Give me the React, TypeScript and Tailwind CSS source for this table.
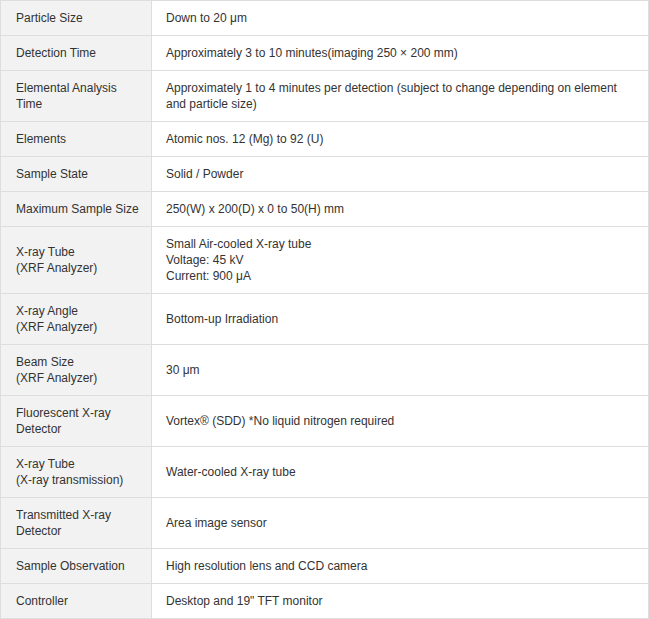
import React from "react";

const rows: [React.ReactNode, React.ReactNode][] = [
  ["Particle Size", "Down to 20 μm"],
  ["Detection Time", "Approximately 3 to 10 minutes(imaging 250 × 200 mm)"],
  [
    "Elemental Analysis Time",
    "Approximately 1 to 4 minutes per detection (subject to change depending on element and particle size)",
  ],
  ["Elements", "Atomic nos. 12 (Mg) to 92 (U)"],
  ["Sample State", "Solid / Powder"],
  ["Maximum Sample Size", "250(W) x 200(D) x 0 to 50(H) mm"],
  [
    <>X-ray Tube<br />(XRF Analyzer)</>,
    <>Small Air-cooled X-ray tube<br />Voltage: 45 kV<br />Current: 900 μA</>,
  ],
  [<>X-ray Angle<br />(XRF Analyzer)</>, "Bottom-up Irradiation"],
  [<>Beam Size<br />(XRF Analyzer)</>, "30 μm"],
  ["Fluorescent X-ray Detector", "Vortex® (SDD) *No liquid nitrogen required"],
  [<>X-ray Tube<br />(X-ray transmission)</>, "Water-cooled X-ray tube"],
  ["Transmitted X-ray Detector", "Area image sensor"],
  ["Sample Observation", "High resolution lens and CCD camera"],
  ["Controller", "Desktop and 19\" TFT monitor"],
];

export default function App() {
  return (
    <div className="bg-white" style={{ fontFamily: '"Liberation Sans", Arial, sans-serif' }}>
      <table className="w-[649px] table-fixed border-collapse text-[12px] leading-[16px] text-[#333]">
        <colgroup>
          <col className="w-[151px]" />
          <col />
        </colgroup>
        <tbody>
          {rows.map(([k, v], i) => (
            <tr key={i}>
              <td className="border border-[#dddddd] bg-[#f2f2f2] py-[9px] pl-[15px] pr-[10px] align-middle">
                {k}
              </td>
              <td className="border border-[#dddddd] bg-white py-[9px] pl-[14px] pr-[14px] align-middle">
                {v}
              </td>
            </tr>
          ))}
        </tbody>
      </table>
    </div>
  );
}
